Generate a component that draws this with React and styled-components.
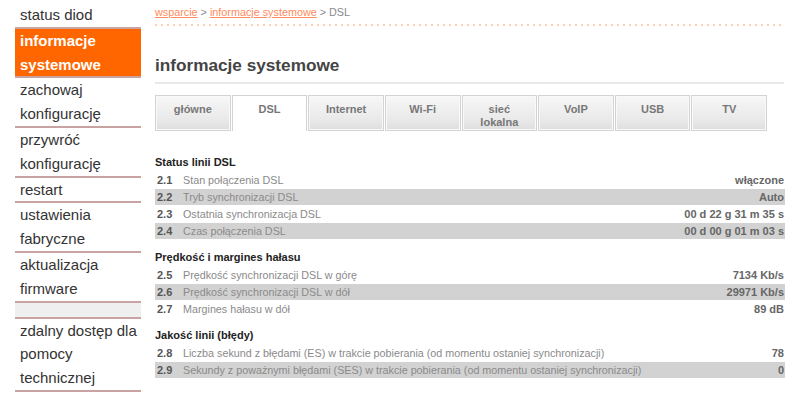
import React from "react";
import styled, { createGlobalStyle } from "styled-components";

const GlobalStyle = createGlobalStyle`
  body {
    margin: 0;
    background: #fff;
    font-family: "Liberation Sans", Arial, sans-serif;
  }
`

const Page = styled.div`
  display: flex;
  align-items: flex-start;
  gap: 14px;
  padding-left: 15px;
  width: 811px;
  box-sizing: border-box;
`

const Sidebar = styled.ul`
  list-style: none;
  margin: 0;
  padding: 3px 0 0;
  width: 126px;
  flex-shrink: 0;
`

const NavItem = styled.li`
  padding: 0 0 0 5px;
  font-size: 15px;
  line-height: 23.8px;
  white-space: nowrap;
  color: ${props => (props.active ? "#fff" : "#333")};
  font-weight: ${props => (props.active ? "bold" : "normal")};
  background: ${props => (props.active ? "#ff6600" : "transparent")};
  border-bottom: 2px solid #c9a2a2;
`

const NavSpacer = styled.li`
  height: 14px;
  background: #efefef;
  border-bottom: 2px solid #c9a2a2;
`

const Main = styled.div`
  width: 630px;
`

const Breadcrumb = styled.div`
  padding-top: 5px;
  font-size: 10.8px;
  line-height: 14px;
  color: #8a8a8a;
`

const Crumb = styled.a`
  color: #ff8a5c;
  text-decoration: underline;
`

const Dotted = styled.div`
  margin-top: 5px;
  width: 628px;
  height: 2px;
  background: repeating-linear-gradient(
    to right,
    #fdcfb5 0 2px,
    transparent 2px 6px
  );
`

const Title = styled.h1`
  margin: 28px 0 0;
  padding-bottom: 6px;
  width: 629px;
  font-size: 17.2px;
  line-height: 22px;
  font-weight: bold;
  color: #444;
  border-bottom: 2px solid #e8e8e8;
`

const Tabs = styled.div`
  display: flex;
  width: 612px;
  margin-top: 11px;
`

const Tab = styled.div`
  flex: 1;
  height: 36px;
  box-sizing: border-box;
  padding-top: 7px;
  text-align: center;
  font-size: 11px;
  line-height: 13px;
  font-weight: bold;
  color: #777;
  border: 1px solid #d3d3d3;
  border-bottom: ${props => (props.active ? "none" : "1px solid #d3d3d3")};
  background: ${props =>
    props.active ? "#fff" : "linear-gradient(#f7f7f7, #e9e9e9 70%, #dedede)"};
  box-shadow: ${props => (props.active ? "none" : "inset 0 0 0 1px #f9f9f9")};
  & + & {
    margin-left: 1px;
  }
`

const Section = styled.section`
  margin-top: ${props => (props.first ? "23px" : "10px")};
`

const SectionTitle = styled.h2`
  margin: 0 0 1px;
  font-size: 11px;
  line-height: 17px;
  font-weight: bold;
  color: #222;
`

const Rows = styled.div`
  display: grid;
  gap: 1px;
`

const Row = styled.div`
  display: grid;
  grid-template-columns: 26px 1fr auto;
  align-items: center;
  height: 16px;
  padding: 0 1px 0 2px;
  font-size: 10.75px;
  background: ${props => (props.shaded ? "#d2d2d2" : "transparent")};
`

const Num = styled.span`
  font-weight: bold;
  font-size: 11px;
  color: #555;
`

const Label = styled.span`
  color: #8a8a8a;
  white-space: nowrap;
`

const Value = styled.span`
  font-weight: bold;
  font-size: 11px;
  color: #666;
  text-align: right;
  white-space: nowrap;
`

const nav = [
  { text: "status diod" },
  { lines: ["informacje", "systemowe"], active: true },
  { lines: ["zachowaj", "konfigurację"] },
  { lines: ["przywróć", "konfigurację"] },
  { text: "restart" },
  { lines: ["ustawienia", "fabryczne"] },
  { lines: ["aktualizacja", "firmware"] },
  { spacer: true },
  { lines: ["zdalny dostęp dla", "pomocy", "technicznej"] },
]

const tabs = [
  ["główne"],
  ["DSL"],
  ["Internet"],
  ["Wi-Fi"],
  ["sieć", "lokalna"],
  ["VoIP"],
  ["USB"],
  ["TV"],
]

const sections = [
  {
    title: "Status linii DSL",
    rows: [
      ["2.1", "Stan połączenia DSL", "włączone"],
      ["2.2", "Tryb synchronizacji DSL", "Auto"],
      ["2.3", "Ostatnia synchronizacja DSL", "00 d 22 g 31 m 35 s"],
      ["2.4", "Czas połączenia DSL", "00 d 00 g 01 m 03 s"],
    ],
  },
  {
    title: "Prędkość i margines hałasu",
    rows: [
      ["2.5", "Prędkość synchronizacji DSL w górę", "7134 Kb/s"],
      ["2.6", "Prędkość synchronizacji DSL w dół", "29971 Kb/s"],
      ["2.7", "Margines hałasu w dół", "89 dB"],
    ],
  },
  {
    title: "Jakość linii (błędy)",
    rows: [
      [
        "2.8",
        "Liczba sekund z błędami (ES) w trakcie pobierania (od momentu ostaniej synchronizacji)",
        "78",
      ],
      [
        "2.9",
        "Sekundy z poważnymi błędami (SES) w trakcie pobierania (od momentu ostaniej synchronizacji)",
        "0",
      ],
    ],
  },
]

export default function App() {
  return (
    <>
      <GlobalStyle />
      <Page>
        <Sidebar>
          {nav.map((item, i) =>
            item.spacer ? (
              <NavSpacer key={i} />
            ) : (
              <NavItem key={i} active={item.active}>
                {(item.lines || [item.text]).map((l, j) => (
                  <div key={j}>{l}</div>
                ))}
              </NavItem>
            )
          )}
        </Sidebar>
        <Main>
          <Breadcrumb>
            <Crumb>wsparcie</Crumb> &gt; <Crumb>informacje systemowe</Crumb> &gt; DSL
          </Breadcrumb>
          <Dotted />
          <Title>informacje systemowe</Title>
          <Tabs>
            {tabs.map((t, i) => (
              <Tab key={i} active={i === 1}>
                {t.map((l, j) => (
                  <div key={j}>{l}</div>
                ))}
              </Tab>
            ))}
          </Tabs>
          {sections.map((s, i) => (
            <Section key={i} first={i === 0}>
              <SectionTitle>{s.title}</SectionTitle>
              <Rows>
                {s.rows.map(([n, label, value], j) => (
                  <Row key={n} shaded={j % 2 === 1}>
                    <Num>{n}</Num>
                    <Label>{label}</Label>
                    <Value>{value}</Value>
                  </Row>
                ))}
              </Rows>
            </Section>
          ))}
        </Main>
      </Page>
    </>
  )
}
